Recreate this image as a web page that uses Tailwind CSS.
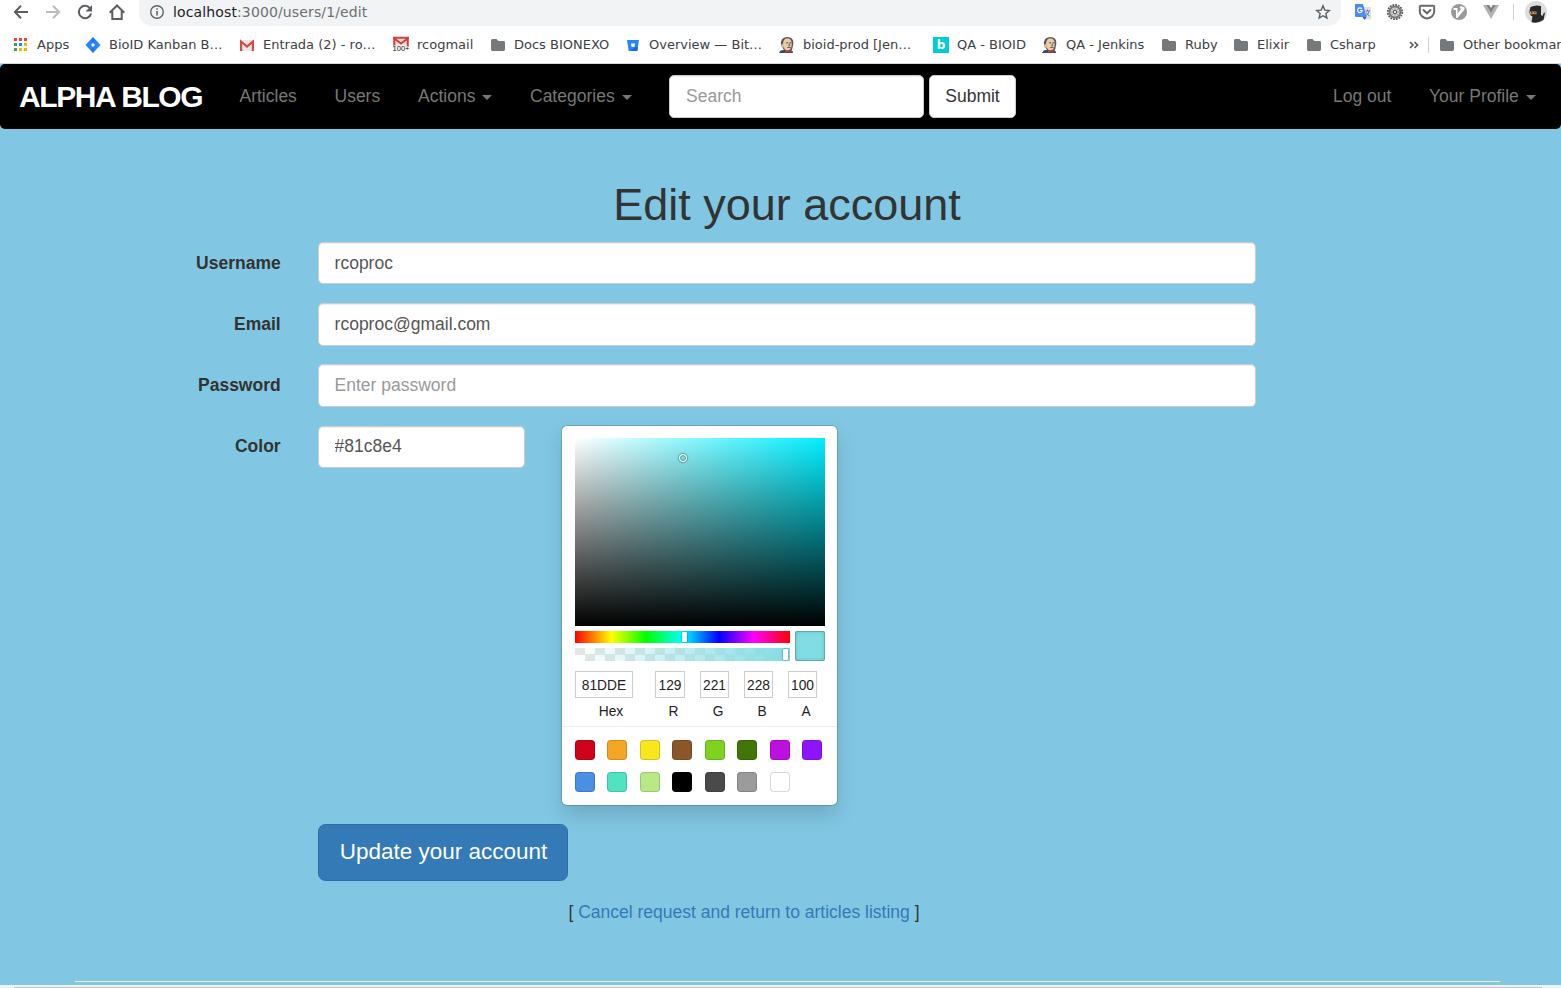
<!DOCTYPE html>
<html lang="en">
<head>
<meta charset="utf-8">
<title>Alpha Blog</title>
<script src="https://cdn.jsdelivr.net/npm/@tailwindcss/browser@4"></script>
</head>
<body class="w-[1561px] h-[988px] overflow-hidden bg-[#81c7e3] font-['Liberation_Sans',Arial,sans-serif] text-[17.5px] leading-[25px] text-[#333]">
<svg class="hidden">
  <symbol id="folder" viewBox="0 0 16 16"><path fill="#75797c" d="M1 3.600Q1 2 2.400 2H6.500l1.800 2h5.300Q15 4 15 5.400v7.200Q15 14 13.600 14H2.400Q1 14 1 12.600z"/></symbol>
  <symbol id="jenkins" viewBox="0 0 16 16">
    <path fill="#35505f" d="M0 16q1-3 4-3h7q3 0 3 3z"/><path fill="#555" d="M2 8Q1 .500 8 0q7 .200 6.300 7l-1.300 6-8 0z"/>
    <path fill="#e8cba9" d="M4 7q0-5.500 4.500-5.700Q13 2 12.700 7q0 6-4.200 6.500-3 0-4-4z"/><path fill="#d9b893" d="M2.500 7H5v3.500H2.500z"/>
    <path stroke="#4a3c30" stroke-width="1" fill="none" d="M7.300 5.800h1.700M10.700 5.800h1.500M8.500 10.500q1.500-.8 3 0M10.200 6.500v2.300"/>
    <path fill="#cc2f39" d="M6 13l2.500 1L12 13v3l-3-1-3 1z"/>
  </symbol>
</svg>

<header class="h-16 bg-white border-b border-[#d5d7da] font-['DejaVu_Sans',sans-serif] text-[13px] leading-4 text-[#3c4043]">
  <div class="h-[26px] flex">
    <div class="w-[139px] h-6 pl-[13px] flex shrink-0 gap-4 items-center text-[#5a5e63]">
      <svg class="size-4" viewBox="0 0 16 16" fill="none" stroke="currentColor" stroke-width="2"><path d="M15 8H2.500M8 1.700 1.900 8 8 14.300"/></svg>
      <svg class="size-4 text-[#babcbe]" viewBox="0 0 16 16" fill="none" stroke="currentColor" stroke-width="2"><path d="M1 8h12.500M8 1.700 14.100 8 8 14.300"/></svg>
      <svg class="size-4" viewBox="0 0 16 16" fill="none" stroke="currentColor" stroke-width="2"><path d="M13.200 4.500A6.200 6.200 0 1 0 14.100 9.500"/><path d="M15 1v6.500H8.500z" fill="currentColor" stroke="none"/></svg>
      <svg class="size-4" viewBox="0 0 16 16" fill="none" stroke="currentColor" stroke-width="2"><path d="M.7 8.700 8 1.500l7.300 7.200M3.300 7v8h9.400V7"/></svg>
    </div>
    <div class="w-[1202px] shrink-0 h-[26px] rounded-b-[13px] bg-[#f1f3f4] flex pl-[10px] pr-[10px]">
      <svg class="size-4 mt-1" viewBox="0 0 16 16" fill="none" stroke="#5f6368" stroke-width="1.400"><circle cx="8" cy="8" r="6.300"/><path d="M8 7v4.500M8 4.200v1.500" stroke-width="1.600"/></svg>
      <div class="ml-2 mt-1 text-[14px] leading-4 tracking-[.13px] text-[#6b6f73] whitespace-nowrap"><span class="text-[#202124]">localhost</span>:3000/users/1/edit</div>
      <svg class="size-4 mt-1 ml-auto" viewBox="0 0 16 16" fill="none" stroke="#5a5e63" stroke-width="1.400"><path d="m8 1.800 1.800 4.300 4.600.4-3.500 3.100 1 4.500L8 11.700l-3.900 2.400 1-4.500-3.500-3.100 4.600-.4z"/></svg>
    </div>
    <div class="flex grow items-center h-6 pl-[13px]">
      <svg class="size-[18px]" viewBox="0 0 18 18"><path fill="#dedfe0" d="M8 4h9v12.500h-6z"/><path fill="#4a8bf5" d="M1 1h8l3.500 13H2Q1 14 1 13z"/><path fill="#3558c8" d="M8.500 14h4l-2 3z"/><path d="M7.700 5.800a2.300 2.300 0 1 0 .5 1.700H6" stroke="#fff" stroke-width="1.200" fill="none"/><path d="M11.500 8h4.500M13.500 6.500V8M15 8.500q-1 3.500-3.500 4.500M12 9.500q1.500 2.500 3.500 3.500" stroke="#607d8b" fill="none"/></svg>
      <svg class="size-[18px] ml-[14px]" viewBox="0 0 18 18" fill="none"><circle cx="9" cy="9" r="7.200" stroke="#555" stroke-width="1.800" stroke-dasharray="1.800 1.030"/><circle cx="9" cy="9" r="5.500" fill="#d5d5d5" stroke="#777" stroke-width="2"/><path d="M9 5v8M5 9h8M6.200 6.200l5.600 5.600M11.800 6.200l-5.600 5.600" stroke="#888" stroke-width=".7"/><circle cx="9" cy="9" r="1.700" fill="#eee" stroke="#555"/></svg>
      <svg class="size-[18px] ml-[14px]" viewBox="0 0 18 18" fill="none" stroke="#68696a" stroke-width="2"><path d="M2.800 2.800h12.400q1 0 1 1v4.400a7.200 7.200 0 0 1-14.400 0V3.800q0-1 1-1z"/><path d="m5.500 7 3.500 3.300L12.500 7" stroke-linecap="round"/></svg>
      <svg class="size-[18px] ml-[14px]" viewBox="0 0 18 18"><circle cx="9" cy="9" r="8" fill="#999"/><path fill="#fff" d="M3.500 5h4v5.500L11 6l-1.500-1.500L11 3l3.500 1.500v2L7.500 15H6V7H3.500z"/></svg>
      <svg class="size-[18px] ml-[14px]" viewBox="0 0 18 18"><path fill="#b0b1b1" d="M1 2h3.500L9 10l4.500-8H17L9 16z"/><path fill="#7e7f80" d="M4.300 2h3L9 5l1.700-3h3L9 10z"/></svg>
      <div class="w-px h-4 bg-[#cfd1d3] ml-[13px]"></div>
      <svg class="size-[22px] ml-[11px]" viewBox="0 0 22 22"><circle cx="11" cy="11" r="11" fill="#ddd"/><path fill="#25272b" d="M5.500 6q5-2.500 10.500-1v9l1.500 1 1.500-3.500 1 .5-1.500 7q-7 4-12 2l1-5.500Q4 14 4.500 10z"/><path fill="#d59b66" d="M5 10.500h6.500v2.700H5z"/><path stroke="#222" d="M6 11.800h1.500M9 11.800h1.500"/></svg>
    </div>
  </div>
  <nav class="flex items-center h-4 mt-[11px] pl-[13px] whitespace-nowrap">
    <div class="w-[72px] shrink-0 flex items-center gap-2"><svg class="size-4 shrink-0" viewBox="0 0 16 16"><path fill="#ea4335" d="M1 1h3v3H1zm5 0h3v3H6zm5 0h3v3h-3z"/><path fill="#34a853" d="M1 6h3v3H1zm0 5h3v3H1z"/><path fill="#1a8cec" d="M6 6h3v3H6z"/><path fill="#f5b400" d="M11 6h3v3h-3zm0 5h3v3h-3zm-5 0h3v3H6z"/></svg>Apps</div>
    <div class="w-[154px] shrink-0 flex items-center gap-2"><svg class="size-4 shrink-0" viewBox="0 0 16 16"><path fill="#2684ff" fill-rule="evenodd" d="M8 0 15.500 8 8 16 .500 8zM8 6 6 8l2 2 2-2z"/><path fill="#1b6fe6" d="m8 0 1.500 3L8 6Q6.500 3 8 0zM8 16l-1.500-3L8 10Q9.500 13 8 16z"/></svg>BioID Kanban B…</div>
    <div class="w-[154px] shrink-0 flex items-center gap-2"><svg class="size-4 shrink-0" viewBox="0 0 16 16"><path fill="#e8e8e8" d="M1 3h14v11H1z"/><path d="M2.100 14V4.500L8 9.500l5.900-5V14" fill="none" stroke="#d54b3d" stroke-width="2.200"/></svg>Entrada (2) - ro…</div>
    <div class="w-[97px] shrink-0 flex items-center gap-2"><svg class="size-4 shrink-0 overflow-visible" viewBox="0 0 16 16"><path fill="#f4e5e4" d="M0 0h16v10H0z"/><path d="M1.300 10V1.500L8 6.500l6.700-5V10M0 .7h16" fill="none" stroke="#db3b37" stroke-width="2"/><text x="-.5" y="14" font-size="8" textLength="17" lengthAdjust="spacingAndGlyphs" font-family="Liberation Sans" fill="#111" stroke="#fff" stroke-width="1" paint-order="stroke">100+</text></svg>rcogmail</div>
    <div class="w-[135px] shrink-0 flex items-center gap-2"><svg class="size-4 shrink-0"><use href="#folder"/></svg>Docs BIONEXO</div>
    <div class="w-[154px] shrink-0 flex items-center gap-2"><svg class="size-4 shrink-0" viewBox="0 0 16 16"><path fill="#2684ff" d="M2 3h12l-1.700 11H3.700z"/><path fill="#176ae0" d="M10 10h3l-.7 4H5z"/><path fill="#fff" d="M6 6.500h4l-.6 3.500H6.600z"/></svg>Overview — Bit…</div>
    <div class="w-[154px] shrink-0 flex items-center gap-2"><svg class="size-4 shrink-0"><use href="#jenkins"/></svg>bioid-prod [Jen…</div>
    <div class="w-[109px] shrink-0 flex items-center gap-2"><span class="size-4 shrink-0 bg-[#00cdd7] text-white font-bold text-center text-[12px] leading-[17px]">b</span>QA - BIOID</div>
    <div class="w-[119px] shrink-0 flex items-center gap-2"><svg class="size-4 shrink-0"><use href="#jenkins"/></svg>QA - Jenkins</div>
    <div class="w-[72px] shrink-0 flex items-center gap-2"><svg class="size-4 shrink-0"><use href="#folder"/></svg>Ruby</div>
    <div class="w-[73px] shrink-0 flex items-center gap-2"><svg class="size-4 shrink-0"><use href="#folder"/></svg>Elixir</div>
    <div class="w-[102px] shrink-0 flex items-center gap-2"><svg class="size-4 shrink-0"><use href="#folder"/></svg>Csharp</div>
    <svg class="w-5 h-4 shrink-0" viewBox="0 0 20 16" fill="none" stroke="#5a5e63" stroke-width="1.700"><path d="m2 5 3 3-3 3M6.500 5l3 3-3 3"/></svg>
    <div class="w-[11px] h-4 shrink-0 border-l border-[#cfd1d3]"></div>
    <div class="shrink-0 flex items-center gap-2"><svg class="size-4 shrink-0"><use href="#folder"/></svg>Other bookmarks</div>
  </nav>
</header>

<nav class="h-[65px] bg-black rounded-[5px] flex items-center text-[#777] whitespace-nowrap">
  <div class="w-[239.500px] pl-[19px] text-[30px] leading-[34px] font-bold tracking-[-1.400px] text-white">ALPHA BLOG</div>
  <div class="w-[95px]">Articles</div>
  <div class="w-[83.500px]">Users</div>
  <div class="w-[112px] flex items-center gap-[7px]">Actions <span class="mt-px border-x-[5px] border-t-[5px] border-x-transparent border-t-[#777]"></span></div>
  <div class="w-[139px] flex items-center gap-[7px]">Categories <span class="mt-px border-x-[5px] border-t-[5px] border-x-transparent border-t-[#777]"></span></div>
  <input class="w-[255px] h-[43px] rounded-[5px] bg-white border border-[#ccc] px-4 placeholder:text-[#999] shadow-[inset_0_1px_1px_rgba(0,0,0,.075)]" placeholder="Search">
  <button class="ml-[5px] w-[87px] h-[43px] rounded-[5px] bg-white border border-[#ccc] text-[#333]">Submit</button>
  <div class="ml-auto w-[96px]">Log out</div>
  <div class="w-[132px] flex items-center gap-[7px]">Your Profile <span class="mt-px border-x-[5px] border-t-[5px] border-x-transparent border-t-[#777]"></span></div>
</nav>

<main class="h-[856px] flex flex-col">
  <h1 class="pt-[51px] pl-[13px] h-[113px] text-center text-[45px] leading-[50px]">Edit your account</h1>
  <form class="flex flex-col">
    <div class="h-[42px] mb-[19.300px] flex items-center"><label class="w-[280.700px] mr-[37.300px] text-right font-bold">Username</label><input class="w-[938px] h-full rounded-[5px] border border-[#ccc] bg-white px-[15.600px] text-[#555] shadow-[inset_0_1px_1px_rgba(0,0,0,.075)]" value="rcoproc"></div>
    <div class="h-[42.500px] mb-[18.700px] flex items-center"><label class="w-[280.700px] mr-[37.300px] text-right font-bold">Email</label><input class="w-[938px] h-full rounded-[5px] border border-[#ccc] bg-white px-[15.600px] text-[#555] shadow-[inset_0_1px_1px_rgba(0,0,0,.075)]" value="rcoproc@gmail.com"></div>
    <div class="h-[42.500px] mb-[18.700px] flex items-center"><label class="w-[280.700px] mr-[37.300px] text-right font-bold">Password</label><input class="w-[938px] h-full rounded-[5px] border border-[#ccc] bg-white px-[15.600px] placeholder:text-[#999] shadow-[inset_0_1px_1px_rgba(0,0,0,.075)]" placeholder="Enter password"></div>
    <div class="h-[379px] mb-[19.300px] flex items-start">
      <label class="w-[280.700px] mr-[37.300px] pt-2 text-right font-bold">Color</label>
      <input class="w-[207px] h-[42px] rounded-[5px] border border-[#ccc] bg-white px-[15.600px] text-[#555] shadow-[inset_0_1px_1px_rgba(0,0,0,.075)]" value="#81c8e4">
      <div class="ml-[37px] w-[275px] h-[379px] rounded-[5px] bg-white shadow-[0_0_0_1px_rgba(0,0,0,.15),0_10px_20px_rgba(0,0,0,.15)] text-[13.750px] leading-[17px] text-[#222]">
        <div class="h-[301px] pt-[12px] px-[13px] border-b border-[#eee]">
          <div class="relative w-[250px] h-[188px] bg-[linear-gradient(to_top,#000,transparent),linear-gradient(to_right,#fff,transparent)] bg-[#00eeff]">
            <span class="absolute left-[104px] top-[16px] size-[8px] rounded-full border-[1.500px] border-white shadow-[inset_0_0_1px_1px_rgba(0,0,0,.35),0_0_1px_1px_rgba(0,0,0,.3)]"></span>
          </div>
          <div class="flex gap-[5px] mt-[5px] w-[250px]">
            <div class="w-[215px]">
              <div class="relative h-[12px] bg-[linear-gradient(to_right,#f00_0%,#ff0_17%,#0f0_33%,#0ff_50%,#00f_67%,#f0f_83%,#f00_100%)]"><span class="absolute left-[107.500px] top-[1px] w-[5px] h-[10px] rounded-[1px] bg-white shadow-[0_0_2px_rgba(0,0,0,.6)]"></span></div>
              <div class="relative h-[13px] mt-[5px] bg-[repeating-conic-gradient(#fff_0_25%,#e6e6e6_0_50%)] bg-[length:20px_13px] bg-[position:0_0]">
                <div class="h-full bg-[linear-gradient(to_right,transparent,#81dde4)]"></div>
                <span class="absolute left-[208.500px] top-[1px] w-[5px] h-[11px] rounded-[1px] bg-white shadow-[0_0_2px_rgba(0,0,0,.6)]"></span></div>
            </div>
            <div class="size-[30px] rounded-[2px] bg-[#81dde4] shadow-[inset_0_0_0_1px_rgba(0,0,0,.15),inset_0_0_4px_rgba(0,0,0,.25)]"></div>
          </div>
          <div class="flex mt-[10px] text-center">
            <div class="w-[80px]"><div class="w-[58px] h-[27px] border border-[#ccc] leading-[27px]">81DDE</div><div class="mt-[5px] w-[72px]">Hex</div></div>
            <div class="w-[45px]"><div class="w-[30px] h-[27px] border border-[#ccc] leading-[27px] overflow-hidden">129</div><div class="mt-[5px] w-[37px]">R</div></div>
            <div class="w-[44px]"><div class="w-[29px] h-[27px] border border-[#ccc] leading-[27px] overflow-hidden">221</div><div class="mt-[5px] w-[36px]">G</div></div>
            <div class="w-[44px]"><div class="w-[29px] h-[27px] border border-[#ccc] leading-[27px] overflow-hidden">228</div><div class="mt-[5px] w-[36px]">B</div></div>
            <div class="w-[36px]"><div class="w-[29px] h-[27px] border border-[#ccc] leading-[27px] overflow-hidden">100</div><div class="mt-[5px] w-[36px]">A</div></div>
          </div>
        </div>
        <div class="pl-[13px] pt-[13px] grid grid-cols-[repeat(8,32.480px)] gap-y-3 *:size-5 *:rounded-[4px] *:shadow-[inset_0_0_0_1px_rgba(0,0,0,.15)]">
          <i class="bg-[#d0021b]"></i><i class="bg-[#f5a623]"></i><i class="bg-[#f8e71c]"></i><i class="bg-[#8b572a]"></i><i class="bg-[#7ed321]"></i><i class="bg-[#417505]"></i><i class="bg-[#bd10e0]"></i><i class="bg-[#9013fe]"></i>
          <i class="bg-[#4a90e2]"></i><i class="bg-[#50e3c2]"></i><i class="bg-[#b8e986]"></i><i class="bg-black"></i><i class="bg-[#4a4a4a]"></i><i class="bg-[#9b9b9b]"></i><i class="bg-white"></i>
        </div>
      </div>
    </div>
    <button class="ml-[318px] w-[250px] h-[57px] rounded-[7.500px] bg-[#337ab7] border border-[#2e6da4] text-white text-[22.500px] leading-[28px] pl-px pb-px">Update your account</button>
  </form>
  <p class="mt-[19px] pl-[568.400px]">[ <a class="text-[#337ab7]">Cancel request and return to articles listing</a> ]</p>
  <hr class="mt-auto mb-[3px] ml-[75px] w-[1425px] border-t border-[#eee]">
</main>
<footer class="h-[3px] bg-[#f2f2f2] pt-[2px] pl-[14px]"><div class="w-[1528px] h-px bg-[#c1c1c1]"></div></footer>
</body>
</html>
